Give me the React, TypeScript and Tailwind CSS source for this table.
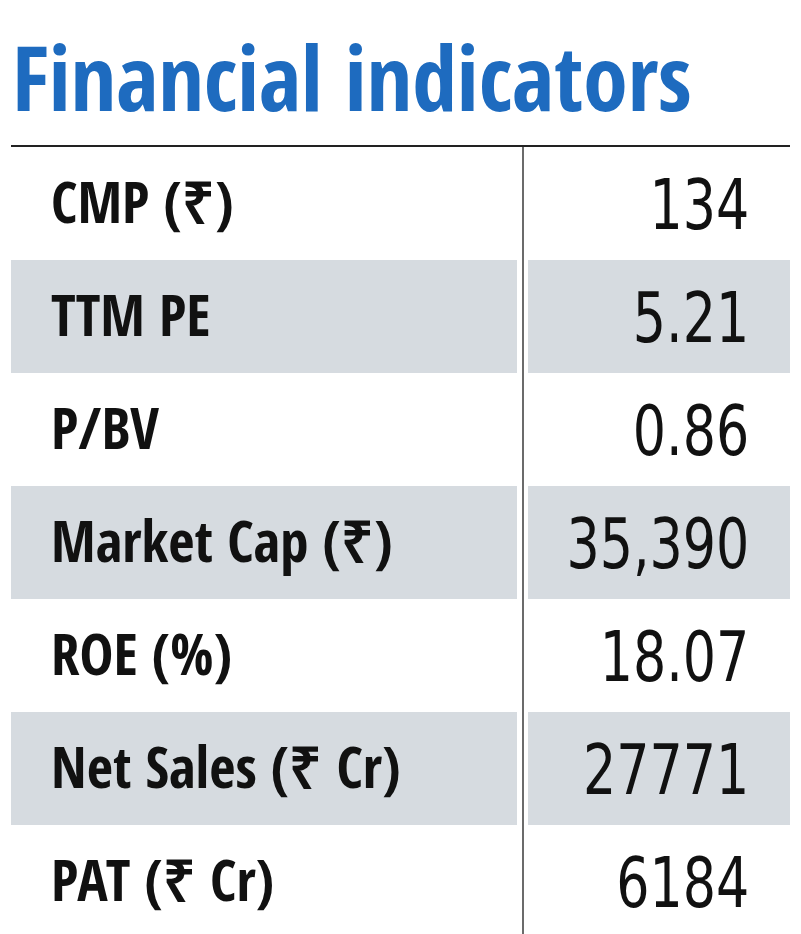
const rows = [
  { label: "CMP (₹)", value: "134" },
  { label: "TTM PE", value: "5.21" },
  { label: "P/BV", value: "0.86" },
  { label: "Market Cap (₹)", value: "35,390" },
  { label: "ROE (%)", value: "18.07" },
  { label: "Net Sales (₹ Cr)", value: "27771" },
  { label: "PAT (₹ Cr)", value: "6184" },
];

export default function App() {
  return (
    <div className="h-[934px] w-[801px] overflow-hidden bg-white">
      {/* Title */}
      <h1 className="h-[145px] pl-[12px] pt-[31px] font-['Open_Sans_Condensed','Open_Sans',sans-serif] text-[90px] font-bold leading-none text-[#1e6bbf]">
        Financial indicators
      </h1>

      {/* Table */}
      <div className="mx-[11px] border-t-2 border-[#222]">
        {rows.map((r, i) => (
          <div key={r.label} className="grid h-[113px] grid-cols-[506px_11px_1fr]">
            <div
              className={`flex items-center pb-[4px] pl-[40px] font-['Open_Sans_Condensed','Open_Sans',sans-serif] text-[57px] font-bold text-[#111] ${
                i % 2 === 1 ? "bg-[#d6dbe0]" : "bg-white"
              }`}
            >
              {r.label}
            </div>
            <div className="flex justify-center">
              <div className="h-full w-[2px] bg-[#6b6b6b]" />
            </div>
            <div
              className={`flex items-center justify-end overflow-hidden pt-[4px] pr-[41px] font-['DejaVu_Sans_Condensed','DejaVu_Sans',sans-serif] text-[70px] text-[#111] ${
                i % 2 === 1 ? "bg-[#d6dbe0]" : "bg-white"
              }`}
            >
              <span className="inline-block origin-right scale-x-[0.83]">{r.value}</span>
            </div>
          </div>
        ))}
      </div>
    </div>
  );
}
